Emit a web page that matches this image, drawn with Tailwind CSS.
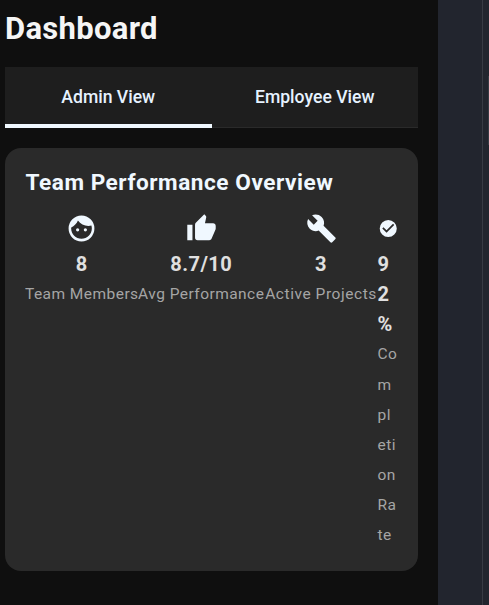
<!DOCTYPE html>
<html lang="en">
<head>
<meta charset="utf-8">
<title>Dashboard</title>
<script src="https://cdn.jsdelivr.net/npm/@tailwindcss/browser@4"></script>
</head>
<body class="flex h-[605px] w-[489px] overflow-hidden bg-[#0f0f0f] font-[Roboto,sans-serif]">
<main class="w-[438px] shrink-0 pl-[5px] pr-5 pt-2">
  <h1 class="h-[59px] text-[31px] leading-[42px] font-bold tracking-[0.3px] text-[#f5f5f5]">Dashboard</h1>
  <nav class="flex h-[61px] border-b border-[#2a2a2a] bg-[#1e1e1e] text-[17.6px] font-medium text-[#e6f2ff]">
    <div class="flex h-[61px] flex-1 items-center justify-center border-b-4 border-[#f0f8ff] pt-[4px]">Admin View</div>
    <div class="flex h-[60px] flex-1 items-center justify-center pt-px">Employee View</div>
  </nav>
  <section class="mt-5 h-[423px] rounded-[16px] bg-[#2a2a2a] pl-[20.5px] pt-5">
    <h2 class="h-[45px] text-[22.6px] leading-[30px] font-bold tracking-[0.54px] text-[#f0f8ff]">Team Performance Overview</h2>
    <div class="flex text-[15.5px] leading-[30.15px] tracking-[0.46px] text-[#a5a5a5]">
      <div class="flex w-[112.5px] shrink-0 flex-col items-center whitespace-nowrap">
        <svg class="h-[31px] w-[31px] shrink-0 fill-[#f0f8ff]" viewBox="0 0 24 24"><path d="M9 11.75A1.25 1.25 0 1 0 9 14.25A1.25 1.25 0 0 0 9 11.75M15 11.75A1.25 1.25 0 1 0 15 14.25A1.25 1.25 0 0 0 15 11.75M12 2A10 10 0 1 0 12 22A10 10 0 0 0 12 2M12 20C7.59 20 4 16.41 4 12C4 11.71 4 11.42 4.05 11.14C6.41 10.09 8.28 8.16 9.26 5.77C11.07 8.33 14.05 10 17.42 10C18.2 10 18.95 9.91 19.67 9.74C19.88 10.45 20 11.21 20 12C20 16.41 16.41 20 12 20Z"/></svg>
        <b class="mt-[5px] text-[20px] tracking-[0.5px] text-[#e0e0e0]">8</b><span>Team Members</span>
      </div>
      <div class="flex w-[126.5px] shrink-0 flex-col items-center whitespace-nowrap">
        <svg class="ml-px h-[31px] w-[31px] shrink-0 fill-[#f0f8ff]" viewBox="0 0 24 24"><path d="M23 10C23 8.89 22.1 8 21 8H14.68L15.64 3.43C15.66 3.33 15.67 3.22 15.67 3.11C15.67 2.7 15.5 2.32 15.23 2.05L14.17 1L7.59 7.58C7.22 7.95 7 8.45 7 9V19A2 2 0 0 0 9 21H18C18.83 21 19.54 20.5 19.84 19.78L22.86 12.73C22.95 12.5 23 12.26 23 12V10M1 21H5V9H1V21Z"/></svg>
        <b class="mt-[5px] text-[20px] tracking-[0.5px] text-[#e0e0e0]">8.7/10</b><span>Avg Performance</span>
      </div>
      <div class="flex w-[113px] shrink-0 flex-col items-center whitespace-nowrap">
        <svg class="h-[31px] w-[31px] shrink-0 fill-[#f0f8ff]" viewBox="0 0 24 24"><path d="M22.7 19L13.6 9.9C14.5 7.6 14 4.9 12.1 3C10.1 1 7.1 .6 4.7 1.7L9 6L6 9L1.6 4.7C.4 7.1 .9 10.1 2.9 12.1C4.8 14 7.5 14.5 9.8 13.6L18.9 22.7C19.3 23.1 19.9 23.1 20.3 22.7L22.6 20.4C23.1 20 23.1 19.3 22.7 19Z"/></svg>
        <b class="mt-[5px] text-[20px] tracking-[0.5px] text-[#e0e0e0]">3</b><span class="tracking-[0.55px]">Active Projects</span>
      </div>
      <div class="flex w-[20px] shrink-0 flex-col">
        <svg class="my-[5px] h-[21px] w-[20.5px] shrink-0 fill-[#f0f8ff]" viewBox="0 0 24 24"><path d="M12 2A10 10 0 1 0 12 22A10 10 0 0 0 12 2M10 17L5 12L6.41 10.59L10 14.17L17.59 6.58L19 8L10 17Z"/></svg>
        <b class="mt-[5px] text-[20px] tracking-[0.5px] text-[#e0e0e0]">9<br>2<br>%</b><span>Co<br>m<br>pl<br>eti<br>on<br>Ra<br>te</span>
      </div>
    </div>
  </section>
</main>
<aside class="relative flex-1 bg-[#22252e]">
  <div class="h-full w-[45px] border-r border-[#383b44]"></div>
  <div class="absolute right-0 top-[76px] h-[69px] w-px bg-[#383b44]"></div>
</aside>
</body>
</html>
